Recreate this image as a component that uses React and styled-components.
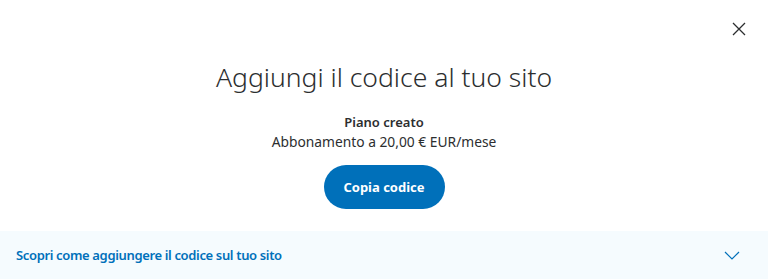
import React from "react";
import styled, { createGlobalStyle } from "styled-components";

const GlobalStyle = createGlobalStyle`
  html, body {
    margin: 0;
    padding: 0;
    background: #ffffff;
    font-family: "Noto Sans", "Liberation Sans", sans-serif;
    color: #2c2e2f;
  }
`;

const Modal = styled.div`
  width: 768px;
  height: 279px;
  display: flex;
  flex-direction: column;
  position: relative;
  overflow: hidden;
`;

const CloseButton = styled.button`
  position: absolute;
  top: 20px;
  right: 20px;
  width: 18px;
  height: 18px;
  padding: 0;
  border: none;
  background: none;
  display: flex;
  align-items: center;
  justify-content: center;
  cursor: pointer;
`;

const Body = styled.div`
  flex: 1;
  display: flex;
  flex-direction: column;
  align-items: center;
  padding-top: 59px;
`;

const Title = styled.h1`
  margin: 0;
  font-size: 26.5px;
  font-weight: 300;
  line-height: 36px;
  color: #2c2e2f;
`;

const PlanName = styled.div`
  margin-top: 17px;
  font-size: 13px;
  font-weight: 600;
  line-height: 20px;
`;

const PlanPrice = styled.div`
  font-size: 13.8px;
  line-height: 20px;
`;

const CopyButton = styled.button`
  margin-top: 13px;
  width: 121px;
  height: 44px;
  border: none;
  border-radius: 22px;
  background: #0070ba;
  color: #ffffff;
  font-family: inherit;
  font-size: 13px;
  font-weight: 700;
  cursor: pointer;
`;

const Accordion = styled.div`
  height: 48px;
  background: #f5fbfe;
  display: flex;
  align-items: center;
  justify-content: space-between;
  padding: 0 28px 0 16px;
`;

const AccordionLabel = styled.span`
  color: #0070ba;
  font-size: 13px;
  font-weight: 600;
  letter-spacing: -0.35px;
`;

const App = () => {
  return (
    <Modal>
      <GlobalStyle />
      <CloseButton aria-label="Chiudi">
        <svg width="14" height="14" viewBox="0 0 14 14">
          <path d="M1 1 L13 13 M13 1 L1 13" stroke="#2c2e2f" strokeWidth="1.3" />
        </svg>
      </CloseButton>
      <Body>
        <Title>Aggiungi il codice al tuo sito</Title>
        <PlanName>Piano creato</PlanName>
        <PlanPrice>Abbonamento a 20,00 € EUR/mese</PlanPrice>
        <CopyButton>Copia codice</CopyButton>
      </Body>
      <Accordion>
        <AccordionLabel>Scopri come aggiungere il codice sul tuo sito</AccordionLabel>
        <svg width="16" height="9" viewBox="0 0 16 9">
          <path d="M1 1 L8 8 L15 1" fill="none" stroke="#0070ba" strokeWidth="1.2" />
        </svg>
      </Accordion>
    </Modal>
  );
};

export default App;
